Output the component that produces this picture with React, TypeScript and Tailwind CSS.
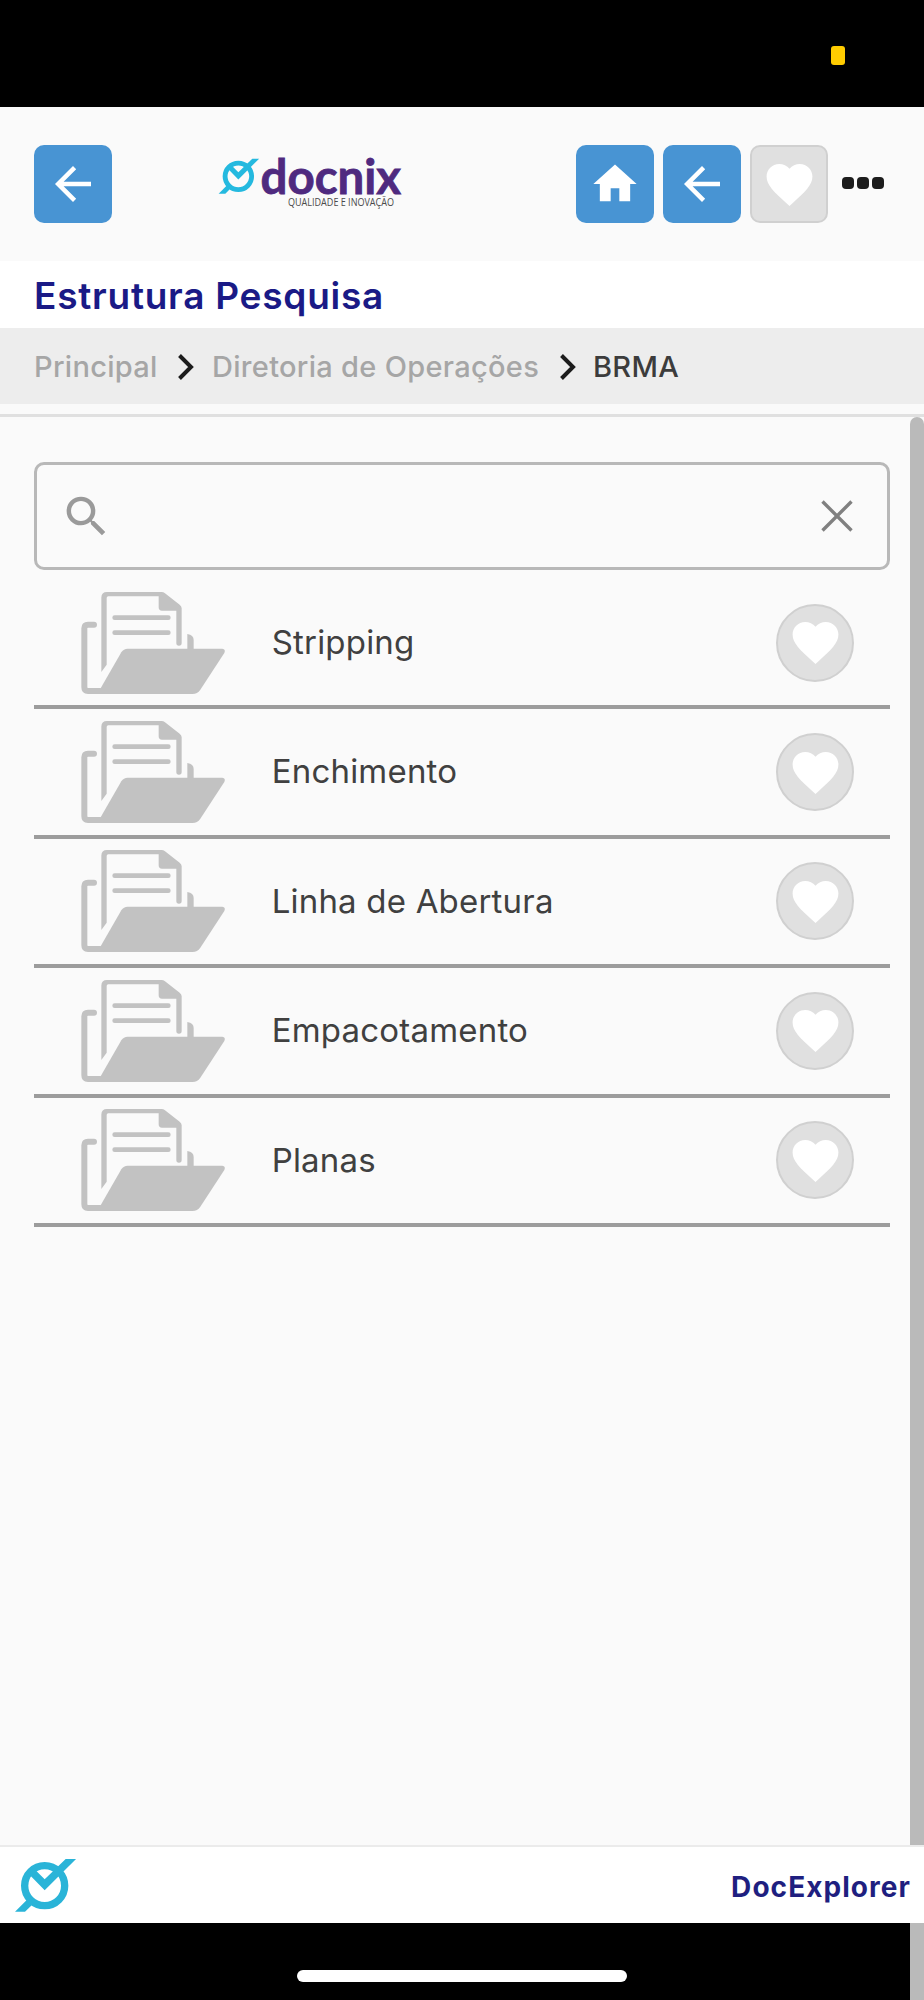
import { MdArrowBack, MdFavorite, MdHome, MdSearch } from 'react-icons/md'

const folders = ['Stripping', 'Enchimento', 'Linha de Abertura', 'Empacotamento', 'Planas']

function BrandMark({ className }: { className?: string }) {
  return (
    <svg viewBox="44 114 188 164" className={className} aria-hidden="true">
      <circle cx="136" cy="197" r="60" fill="none" stroke="currentColor" strokeWidth="22" />
      <path d="M92 166 L108 150 L136 178 L199 117 H230 L136 211 Z" fill="currentColor" />
      <path d="M47 275 H77 L104 249 L86 236 Z" fill="currentColor" />
    </svg>
  )
}

function Logo() {
  return (
    <div className="flex w-[184px] items-start">
      <BrandMark className="h-[36.3px] w-[41.6px] shrink-0 text-[#24b9df]" />
      <svg viewBox="0 0 142 52" className="h-[52px] w-[142px] shrink-0 overflow-visible" role="img" aria-label="docnix">
        <text
          x="0.5"
          y="35.5"
          textLength="140.5"
          lengthAdjust="spacingAndGlyphs"
          strokeWidth="0.8"
          className="fill-[#4f2a7f] stroke-[#4f2a7f] font-['Lato'] text-[47.5px] font-bold"
        >
          docnix
        </text>
        <text
          x="28"
          y="48"
          textLength="106"
          lengthAdjust="spacingAndGlyphs"
          className="fill-[#4a4a4a] font-['Open_Sans'] text-[10px]"
        >
          QUALIDADE E INOVAÇÃO
        </text>
      </svg>
    </div>
  )
}

function FolderIcon() {
  return (
    <svg viewBox="60 62 440 312" className="h-[104px] w-[146.67px] shrink-0 text-[#c2c2c2]" aria-hidden="true">
      <g fill="none" stroke="currentColor" strokeLinecap="round" strokeLinejoin="round">
        <path d="M102 163 H84 Q73 163 73 174 V350 Q73 362 84 362 H120" strokeWidth="18" />
        <path d="M164 142 H325 M164 187 H325" strokeWidth="14" />
      </g>
      <path
        d="M124 305 V82 Q124 65 141 65 H305 Q310 65 315 69 L359 103 Q365 108 365 114 V218 Q365 226 357 226 Q349 226 349 218 V121 H306 Q296 121 296 111 V78 H145 Q140 78 140 83 V283 Z"
        fill="currentColor"
      />
      <path d="M382 240 V191 Q401 194 401 209 V240 Z" fill="currentColor" />
      <path
        d="M203 235 H487 Q498 236 493 248 L421 358 Q412 371 398 371 H112 L184 246 Q191 235 203 235 Z"
        fill="currentColor"
      />
    </svg>
  )
}

function Chevron() {
  return (
    <svg viewBox="0 0 16 26" className="h-[26px] w-4 shrink-0" fill="none" stroke="#1c1c1c" strokeWidth="4">
      <path d="M1.5 1.5 L13 13 L1.5 24.5" />
    </svg>
  )
}

function Header() {
  return (
    <header className="flex h-[154px] shrink-0 items-center pl-[34px] pr-10">
      <button className="flex size-[78px] items-center justify-center rounded-[10px] bg-[#4894d3] text-white">
        <MdArrowBack className="size-[54px]" />
      </button>
      <div className="ml-[106px]">
        <Logo />
      </div>
      <div className="ml-auto flex items-center gap-[9px]">
        <button className="flex size-[78px] items-center justify-center rounded-[10px] bg-[#4894d3] text-white">
          <MdHome className="size-[52px]" />
        </button>
        <button className="flex size-[78px] items-center justify-center rounded-[10px] bg-[#4894d3] text-white">
          <MdArrowBack className="size-[54px]" />
        </button>
        <button className="flex size-[78px] items-center justify-center rounded-[10px] border-2 border-[#d0d0d0] bg-[#e0e0e0] text-white">
          <MdFavorite className="size-[55px] shrink-0" />
        </button>
        <div className="mb-[3px] ml-[5px] flex gap-[3px]">
          <span className="size-3 rounded-[4px] bg-[#1c1c1c]" />
          <span className="size-3 rounded-[4px] bg-[#1c1c1c]" />
          <span className="size-3 rounded-[4px] bg-[#1c1c1c]" />
        </div>
      </div>
    </header>
  )
}

export default function App() {
  return (
    <div className="flex h-[2000px] w-[924px] flex-col overflow-hidden bg-[#fafafa] font-['Inter',sans-serif]">
      {/* Status bar */}
      <div className="flex h-[107px] shrink-0 justify-end bg-black pr-[79px] pt-[46px]">
        <div className="h-[19px] w-[14px] rounded-[3px] bg-[#ffcc00]" />
      </div>

      <Header />

      <div className="flex h-[67px] shrink-0 items-center bg-white pl-[34px] pt-0.5">
        <h1 className="text-[37px] font-semibold tracking-[0.75px] text-[#1a1a86]">Estrutura Pesquisa</h1>
      </div>

      <nav className="flex h-[76px] shrink-0 items-center bg-[#ededed] pl-[34px] pt-0.5 text-[29px] font-medium text-[#a6a6a6]">
        <span className="w-[144px] tracking-[0.3px]">Principal</span>
        <Chevron />
        <span className="ml-[18px] w-[348px] whitespace-nowrap tracking-[0.3px]">Diretoria de Operações</span>
        <Chevron />
        <span className="ml-[17px] tracking-[0.3px] text-[#3c3c3c]">BRMA</span>
      </nav>

      <div className="h-[13px] shrink-0 border-b-[3px] border-[#e0e0e0]" />

      <main className="flex min-h-0 flex-1">
        <div className="flex-1 pl-[34px] pr-5 pt-[45px]">
          <div className="flex h-[108px] items-center justify-between rounded-[10px] border-[3px] border-[#b8b8b8] pl-[23px] pr-[34px]">
            <MdSearch className="size-[53px] text-[#9a9a9a]" />
            <svg viewBox="0 0 32 32" className="size-8" fill="none" stroke="#808080" strokeWidth="3.4">
              <path d="M1.5 1.5 L30.5 30.5 M30.5 1.5 L1.5 30.5" />
            </svg>
          </div>

          <ul className="mt-[10px]">
            {folders.map((name) => (
              <li
                key={name}
                className="flex h-[129.4px] items-center border-b-4 border-[#9c9c9c] pl-[46px] pr-9"
              >
                <FolderIcon />
                <span className="ml-[45px] text-[33px] tracking-[0.2px] text-[#404040]">{name}</span>
                <button className="ml-auto flex size-[78px] items-center justify-center rounded-full border-2 border-[#d0d0d0] bg-[#e0e0e0] text-white">
                  <MdFavorite className="size-[55px] shrink-0" />
                </button>
              </li>
            ))}
          </ul>
        </div>
        <div className="w-[14px] rounded-t-full bg-[#bababa]" />
      </main>

      <footer className="flex h-[78px] shrink-0 items-center justify-between border-t-2 border-[#ebebeb] bg-white pl-[14px] pr-[13px]">
        <BrandMark className="h-[54.7px] w-[62.7px] text-[#2ab4d8]" />
        <span className="pt-1 text-[28px] font-bold tracking-[1.05px] text-[#1f1f80]">DocExplorer</span>
      </footer>

      {/* Home indicator */}
      <div className="flex h-[77px] shrink-0 bg-black">
        <div className="flex flex-1 pl-[297px] pt-[47px]">
          <div className="h-3 w-[330px] rounded-full bg-white" />
        </div>
        <div className="w-[14px] bg-[#bababa]" />
      </div>
    </div>
  )
}
